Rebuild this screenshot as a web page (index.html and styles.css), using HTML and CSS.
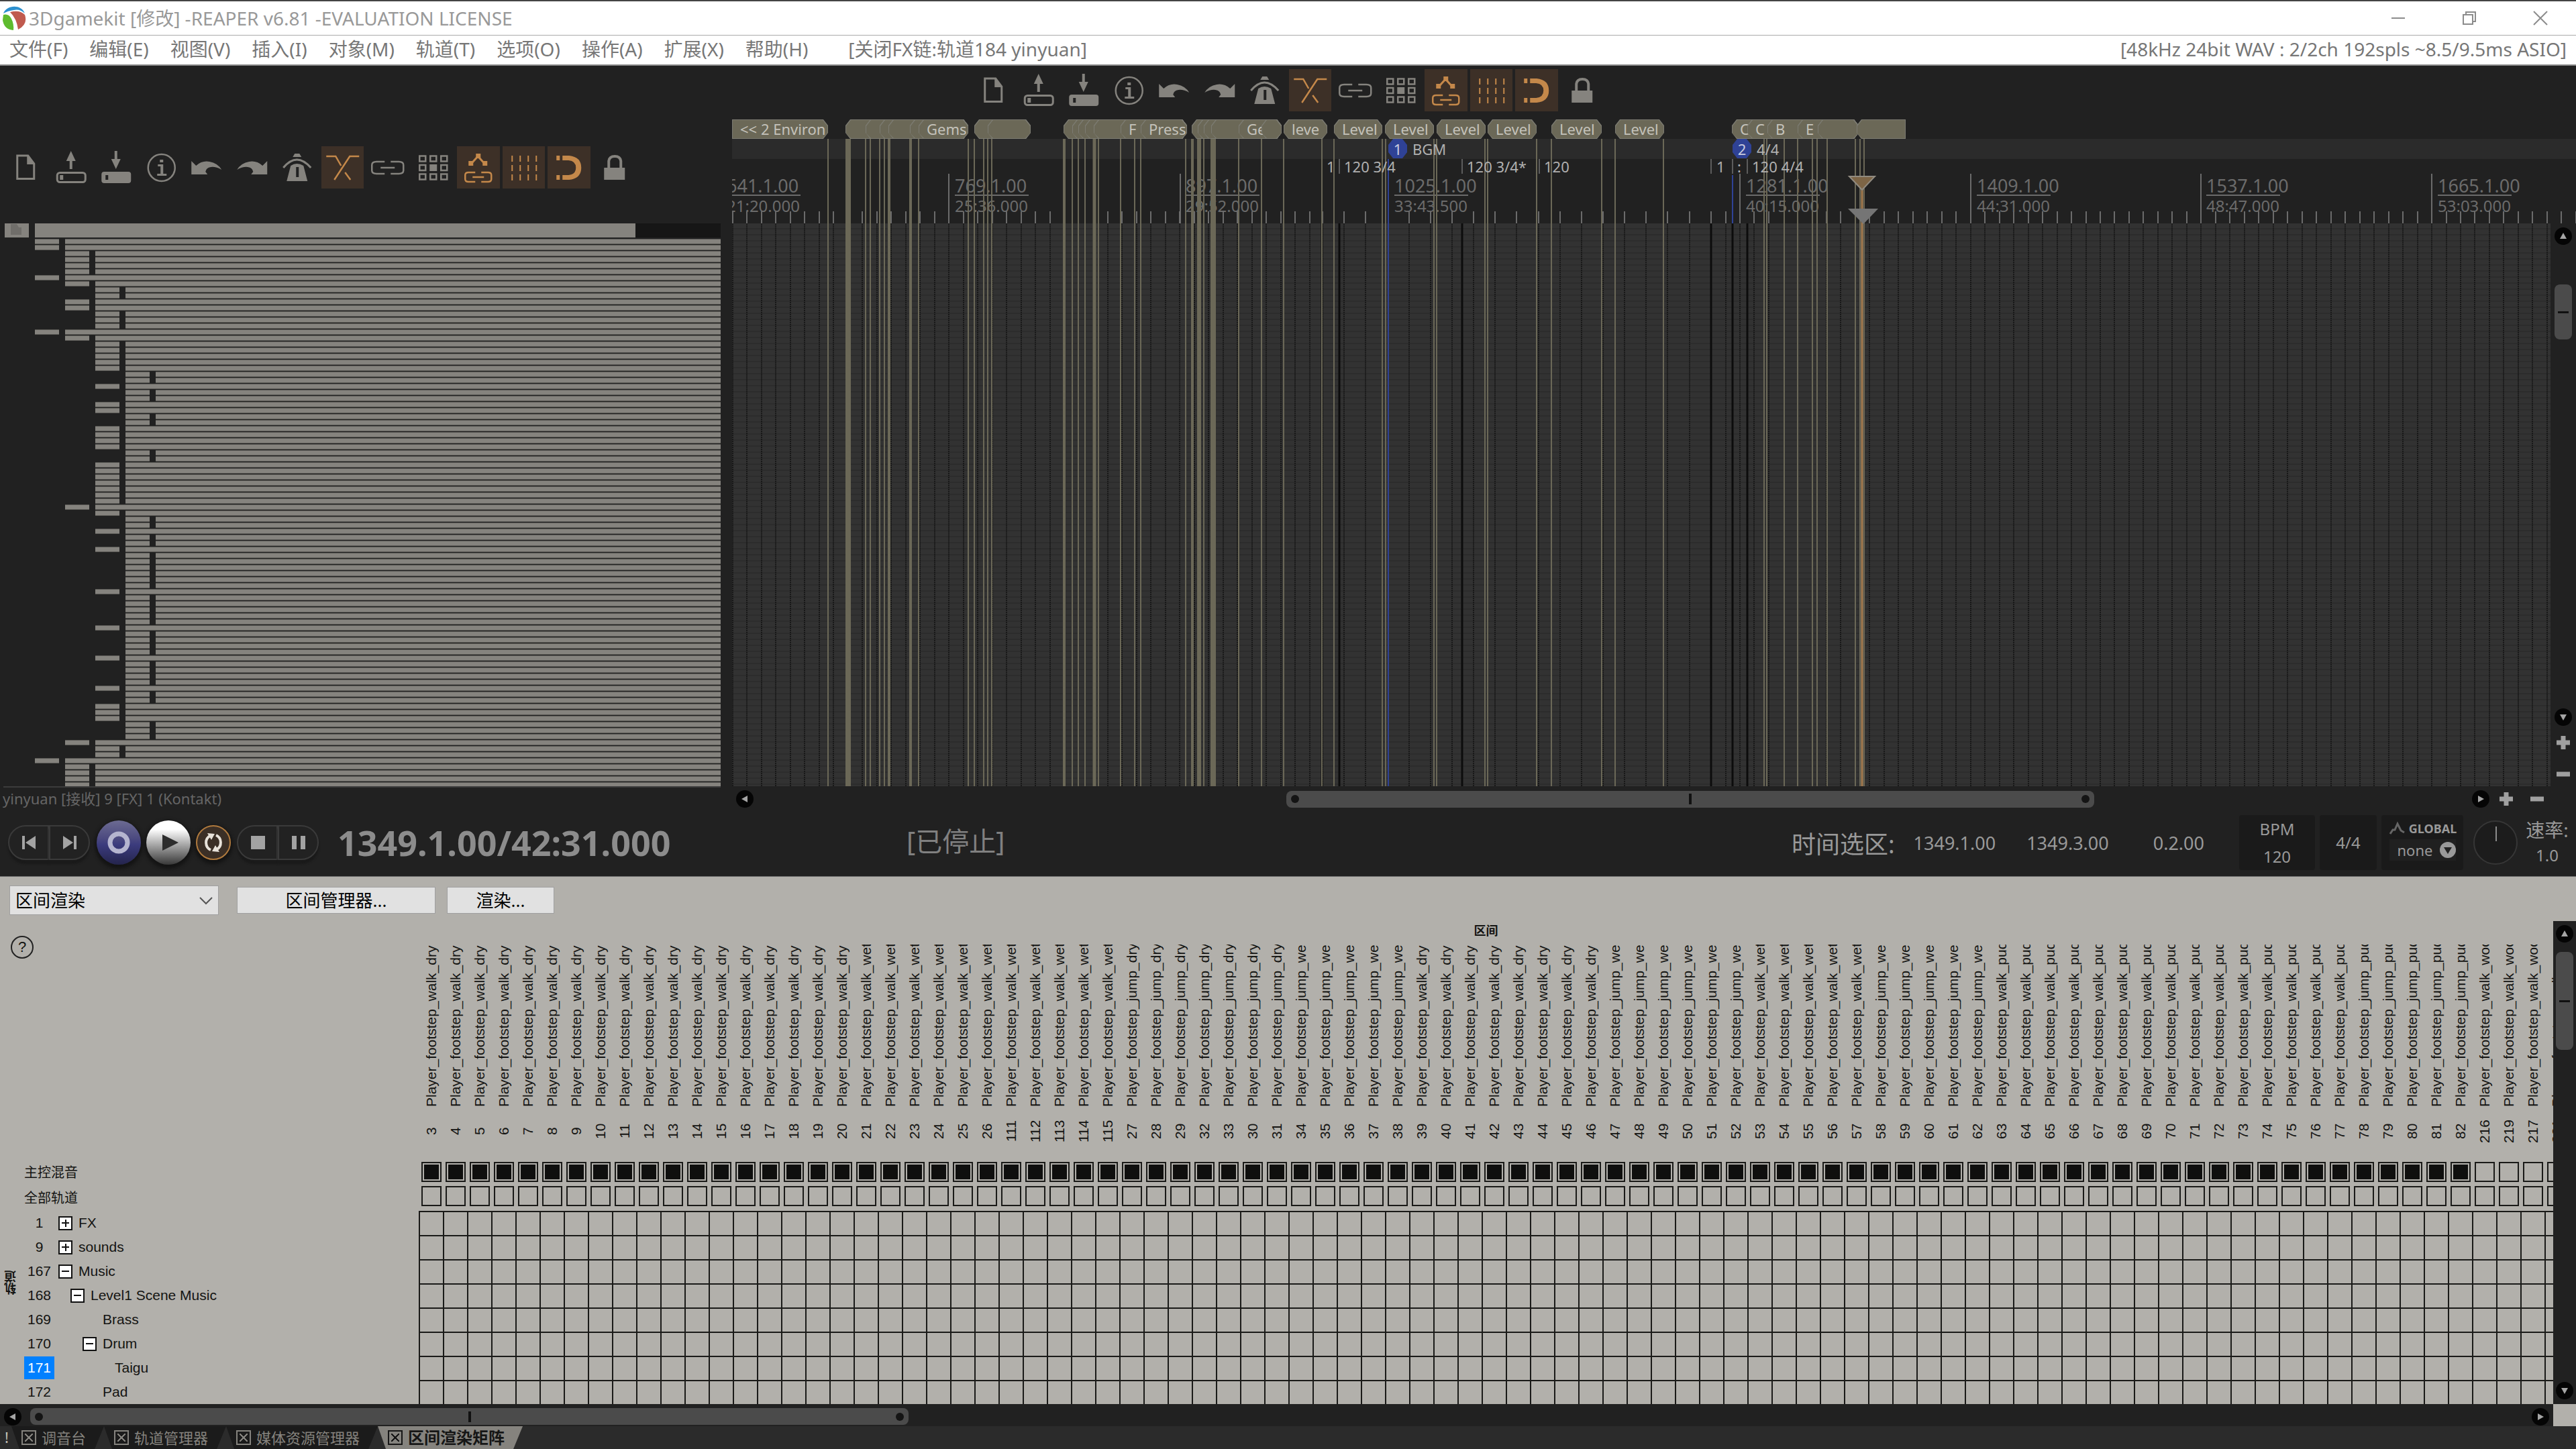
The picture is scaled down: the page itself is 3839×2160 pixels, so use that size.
FILE: index.html
```html
<!DOCTYPE html>
<html lang="zh-CN">
    <head>
        <meta charset="UTF-8">
        <meta name="viewport" content="width=device-width, initial-scale=1.0">
        <title>3Dgamekit - REAPER</title>
        <link rel="stylesheet" href="styles.css">
    </head>
    <body>
        <!-- icon set shared by the toolbars -->
        <svg class="symbols" aria-hidden="true">
            <symbol id="i-new" viewBox="0 0 63 63"><path d="M19.500 14h16l9 12v22.500h-25z" fill="none" stroke="currentColor" stroke-width="3"/><path d="M34 13l12 14H34z" fill="currentColor"/></symbol>
            <symbol id="i-open" viewBox="0 0 63 63"><path d="M31.500 7l7 15h-5v12h-4V22h-5z" fill="currentColor"/><rect x="11" y="39.500" width="42" height="14" rx="4" fill="none" stroke="currentColor" stroke-width="3"/><path d="M15 43h5v7h-5z" fill="currentColor"/></symbol>
            <symbol id="i-save" viewBox="0 0 63 63"><path d="M31.500 34l-7-15h5V7h4v12h5z" fill="currentColor"/><path d="M14 38h36q4 0 4 4v9q0 4-4 4H14q-4 0-4-4v-9q0-4 4-4zm2 5v7h4v-7z" fill="currentColor" fill-rule="evenodd"/></symbol>
            <symbol id="i-info" viewBox="0 0 63 63"><circle cx="31.500" cy="32" r="20" fill="none" stroke="currentColor" stroke-width="2.500"/><path d="M29 20h5v4h-5zM26 27h8v14h5v3H25v-3h5V30h-4z" fill="currentColor"/></symbol>
            <symbol id="i-undo" viewBox="0 0 63 63"><path d="M9 22l7 7q9-8 20-6 12 2 18 12-9-5-16-4-7 1-8 7l3 4H9z" fill="currentColor"/></symbol>
            <symbol id="i-redo" viewBox="0 0 63 63"><path d="M54 22l-7 7q-9-8-20-6-12 2-18 12 9-5 16-4 7 1 8 7l-3 4h24z" fill="currentColor"/></symbol>
            <symbol id="i-metro" viewBox="0 0 63 63"><path d="M28 11h7l3 5H25zM22 29q9-6 19 0l6 23H16zM30 31v15h4V31z" fill="currentColor" fill-rule="evenodd"/><path d="M11 32q20-24 41 0" fill="none" stroke="currentColor" stroke-width="3"/></symbol>
            <symbol id="i-xfade" viewBox="0 0 63 63"><path d="M7 15h14l8 14M56 15H42L19 50M35 39l8 11" fill="none" stroke="currentColor" stroke-width="2.500"/></symbol>
            <symbol id="i-link" viewBox="0 0 63 63"><path d="M27 23H15q-7 0-7 5v8q0 5 7 5h12M36 23h12q7 0 7 5v8q0 5-7 5H36M21 32h21" fill="none" stroke="currentColor" stroke-width="2.500"/></symbol>
            <symbol id="i-group" viewBox="0 0 63 63"><path d="M11 14.500h9v8h-9zM27 14.500h9v8h-9zM43 14.500h9v8h-9zM11 28h9v8h-9zM43 28h9v8h-9zM11 41.500h9v8h-9zM27 41.500h9v8h-9zM43 41.500h9v8h-9z" fill="none" stroke="currentColor" stroke-width="2.500"/><path d="M26 27h11v10H26z" fill="currentColor"/></symbol>
            <symbol id="i-env" viewBox="0 0 63 63"><path d="M21 26l10-11 10 11" fill="none" stroke="currentColor" stroke-width="3"/><path d="M28 11h7v7h-7zM17 22h7v7h-7zM38 22h7v7h-7z" fill="currentColor"/><path d="M27 39H17q-5 0-5 4v6q0 4 5 4h10M36 39h10q5 0 5 4v6q0 4-5 4H36M23 46h17" fill="none" stroke="currentColor" stroke-width="2.500"/></symbol>
            <symbol id="i-grid" viewBox="0 0 63 63"><path d="M14 14v9m0 5v9m0 5v9M26 14v9m0 5v9m0 5v9M38 14v9m0 5v9m0 5v9M50 14v9m0 5v9m0 5v9" fill="none" stroke="currentColor" stroke-width="2"/></symbol>
            <symbol id="i-snap" viewBox="0 0 63 63"><path d="M13 14h5v7h-5zM13 43h5v7h-5zM22 14h10q18 2 18 18T32 50H22v-7h9q11-1 11-11T31 21h-9z" fill="currentColor"/></symbol>
            <symbol id="i-lock" viewBox="0 0 63 63"><path d="M23 32V22q1-7 9-7t9 7v10" fill="none" stroke="currentColor" stroke-width="4"/><path d="M16 32h31v18H16z" fill="currentColor"/></symbol>
            <symbol id="i-tri" viewBox="0 0 26 26"><circle cx="13" cy="13" r="13" fill="#050505"/><path d="M13 8l5 9H8z" fill="#a5a5a5"/></symbol>
        </svg>

        <div class="edge"></div>
        <header class="titlebar">
            <svg class="logo" width="36" height="38" viewBox="0 0 36 38"><circle cx="18" cy="19" r="17" fill="#fff"/><path d="M2 12C6 0 28-3 34 12q-8-7-16-5-9 1-16 5z" fill="#2c90cf"/><path d="M2 14q8-2 12 6 4 8 3 17Q3 36 1 22z" fill="#5ebb2e"/><path d="M12 10q14-4 22 4 5 14-10 22-2-16-12-26z" fill="#c05a4e"/></svg>
            <h1>3Dgamekit [修改] -REAPER v6.81 -EVALUATION LICENSE</h1>
            <div class="window-buttons">
                <button aria-label="最小化"><svg width="26" height="40" viewBox="0 0 26 40"><path d="M3 20h20" stroke="#8c8c8c" stroke-width="2"/></svg></button>
                <button aria-label="还原"><svg width="26" height="40" viewBox="0 0 26 40"><path d="M4 15h14v14H4zM8 15v-4h14v14h-4" fill="none" stroke="#8c8c8c" stroke-width="2"/></svg></button>
                <button aria-label="关闭"><svg width="26" height="40" viewBox="0 0 26 40"><path d="M3 10l20 20M23 10L3 30" stroke="#8c8c8c" stroke-width="2"/></svg></button>
            </div>
        </header>
        <nav class="menubar">
            <button>文件(F)</button>
            <button>编辑(E)</button>
            <button>视图(V)</button>
            <button>插入(I)</button>
            <button>对象(M)</button>
            <button>轨道(T)</button>
            <button>选项(O)</button>
            <button>操作(A)</button>
            <button>扩展(X)</button>
            <button>帮助(H)</button>
            <span class="last-action">[关闭FX链:轨道184 yinyuan]</span>
            <span class="audio-status">[48kHz 24bit WAV : 2/2ch 192spls ~8.5/9.5ms ASIO]</span>
        </nav>

        <main class="workspace">
            <section class="tracks">
                <div class="toolbar"></div>
                <div class="track-list">
                    <div class="master-row">
                        <span class="master-icon"><svg width="36" height="20" viewBox="0 0 36 20"><path d="M9 1h9l3 5h4v11H9z" fill="#706e6a"/></svg></span>
                        <span class="master-bar"></span>
                    </div>
                    <div id="trackRows"></div>
                </div>
                <p class="track-info">yinyuan [接收] 9 [FX] 1 (Kontakt)</p>
            </section>

            <section class="arrange">
                <div class="toolbar"></div>
                <div class="timeline">
                    <div class="lane regions" id="regions"></div>
                    <div class="lane markers"></div>
                    <div class="ruler" id="ruler"></div>
                    <div class="canvas-row">
                        <div class="canvas"></div>
                        <div class="vscroll">
                            <button aria-label="上"><svg><use href="#i-tri"/></svg></button>
                            <div class="vtrack"><div class="vthumb arrange-vthumb"></div></div>
                            <button class="down" aria-label="下"><svg><use href="#i-tri"/></svg></button>
                            <button class="zoom" aria-label="放大"><svg viewBox="0 0 26 26"><path d="M13 3v20M3 13h20" stroke="#a0a0a0" stroke-width="7"/></svg></button>
                            <button class="zoom" aria-label="缩小"><svg viewBox="0 0 26 26"><path d="M3 13h20" stroke="#a0a0a0" stroke-width="7"/></svg></button>
                        </div>
                    </div>
                    <svg class="lines" id="lines"></svg>
                    <div class="flags" id="flags"></div>
                </div>
                <div class="hscroll arrange-hscroll">
                    <button class="left" aria-label="左"><svg><use href="#i-tri"/></svg></button>
                    <div class="htrack"><div class="hthumb arrange-hthumb"></div></div>
                    <button class="right" aria-label="右"><svg><use href="#i-tri"/></svg></button>
                    <button class="zoom" aria-label="水平放大"><svg viewBox="0 0 26 26"><path d="M13 3v20M3 13h20" stroke="#a0a0a0" stroke-width="7"/></svg></button>
                    <button class="zoom" aria-label="水平缩小"><svg viewBox="0 0 26 26"><path d="M3 13h20" stroke="#a0a0a0" stroke-width="7"/></svg></button>
                </div>
            </section>
        </main>

        <section class="transport">
            <div class="transport-buttons">
                <button class="pill first" aria-label="到开头"><svg width="36" height="26" viewBox="0 0 36 26"><path d="M8 3h4v20H8zM28 3v20L13 13z" fill="#a3a3a3"/></svg></button>
                <button class="pill last" aria-label="到结尾"><svg width="36" height="26" viewBox="0 0 36 26"><path d="M24 3h4v20h-4zM8 3v20l15-10z" fill="#a3a3a3"/></svg></button>
                <button class="round record" aria-label="录音"><svg width="40" height="40" viewBox="0 0 40 40"><circle cx="20" cy="20" r="13" fill="none" stroke="#b5b5cf" stroke-width="7"/></svg></button>
                <button class="round play" aria-label="播放"><svg width="40" height="40" viewBox="0 0 40 40"><path d="M11 8l24 12-24 12z" fill="#2c2c2c"/></svg></button>
                <button class="round loop" aria-label="循环"><svg width="34" height="34" viewBox="0 0 34 34"><path d="M13 28C4 24 4 11 12 7M21 6c9 4 9 17 1 21" fill="none" stroke="#e8e2da" stroke-width="4"/><path d="M8 3l11 1-5 9zM26 31l-11-1 5-9z" fill="#e8e2da"/></svg></button>
                <button class="pill first" aria-label="停止"><svg width="36" height="26" viewBox="0 0 36 26"><path d="M8 3h21v20H8z" fill="#a3a3a3"/></svg></button>
                <button class="pill last" aria-label="暂停"><svg width="36" height="26" viewBox="0 0 36 26"><path d="M8 3h7v20H8zM21 3h7v20h-7z" fill="#a3a3a3"/></svg></button>
            </div>
            <output class="position">1349.1.00/42:31.000</output>
            <output class="play-state">[已停止]</output>
            <div class="selection">
                <span class="selection-label">时间选区:</span>
                <span>1349.1.00</span>
                <span>1349.3.00</span>
                <span>0.2.00</span>
            </div>
            <div class="box bpm"><span>BPM</span><span>120</span></div>
            <div class="box signature">4/4</div>
            <div class="box global">
                <label for="automation"><svg width="28" height="22" viewBox="0 0 28 22"><path d="M3 19l4-6 3 0 4-9 5 10 5 3" fill="none" stroke="#666" stroke-width="3"/></svg>GLOBAL</label>
                <div class="automation">
                    <select id="automation"><option>none</option></select>
                    <svg width="24" height="24" viewBox="0 0 24 24"><circle cx="12" cy="12" r="12" fill="#999"/><path d="M6 8h12l-6 10z" fill="#222"/></svg>
                </div>
            </div>
            <svg class="knob" width="68" height="68" viewBox="0 0 68 68"><circle cx="34" cy="34" r="32" fill="#1c1c1c" stroke="#363636" stroke-width="2"/><path d="M35 10v22" stroke="#8c8c8c" stroke-width="2"/></svg>
            <div class="rate"><span>速率:</span><span class="rate-value">1.0</span></div>
        </section>

        <section class="panel">
            <div class="panel-bar">
                <div class="mode">
                    <select aria-label="模式"><option>区间渲染</option></select>
                    <svg width="20" height="14" viewBox="0 0 20 14"><path d="M1 2l9 9 9-9" fill="none" stroke="#555" stroke-width="2"/></svg>
                </div>
                <button class="manager">区间管理器...</button>
                <button class="render">渲染...</button>
            </div>
            <div class="matrix-row">
                <div class="matrix">
                    <div class="matrix-title">
                        <div class="help-cell"><button class="help" aria-label="帮助">?</button></div>
                        <h2>区间</h2>
                    </div>
                    <table id="matrix"></table>
                </div>
                <div class="vscroll">
                    <button aria-label="上"><svg><use href="#i-tri"/></svg></button>
                    <div class="vtrack"><div class="vthumb panel-vthumb"></div></div>
                    <button class="down" aria-label="下"><svg><use href="#i-tri"/></svg></button>
                </div>
            </div>
            <div class="panel-bottom">
                <div class="hscroll">
                    <button class="left" aria-label="左"><svg><use href="#i-tri"/></svg></button>
                    <div class="htrack"><div class="hthumb panel-hthumb"></div></div>
                    <button class="right" aria-label="右"><svg><use href="#i-tri"/></svg></button>
                </div>
                <div class="corner"></div>
            </div>
        </section>

        <footer class="tabs">
            <span class="bang">!</span>
            <button class="tab"><span class="tab-close"></span>调音台</button>
            <button class="tab"><span class="tab-close"></span>轨道管理器</button>
            <button class="tab"><span class="tab-close"></span>媒体资源管理器</button>
            <button class="tab active"><span class="tab-close"></span>区间渲染矩阵</button>
        </footer>

        <script src="script.js"></script>
    </body>
</html>
```

FILE: styles.css
```css
* {
    box-sizing: border-box;
}

body {
    margin: 0;
    height: 100vh;
    display: flex;
    flex-direction: column;
    overflow: hidden;
    background: #212121;
    color: #999;
    font-family: "Noto Sans", "Noto Sans CJK SC", sans-serif;
    font-size: 27px;
}

button, select {
    font: inherit;
    color: inherit;
    background: none;
    border: none;
    padding: 0;
    margin: 0;
    appearance: none;
}

.symbols {
    display: none;
}

/* window chrome */
.edge {
    height: 2px;
    background: #444;
}

.titlebar {
    height: 50px;
    display: flex;
    align-items: center;
    background: #fff;
    padding-left: 3px;
}

.titlebar h1 {
    flex: 1;
    margin: 0 0 3px 4px;
    font-size: 28px;
    font-weight: 400;
    color: #999;
}

.window-buttons {
    display: flex;
}

.window-buttons button {
    width: 106px;
    height: 48px;
    display: flex;
    align-items: center;
    justify-content: center;
}

.menubar {
    height: 46px;
    display: flex;
    align-items: center;
    gap: 32px;
    padding: 0 14px 4px;
    background: #fff;
    border-top: 1px solid #aaa;
    border-bottom: 2px solid #8c8c8c;
    color: #777;
    font-size: 28px;
    line-height: 38px;
    white-space: nowrap;
}

.last-action {
    flex: 1;
    margin-left: 28px;
}

/* workspace */
.workspace {
    flex: 1;
    display: flex;
    min-height: 0;
}

.tracks {
    width: 1091px;
    display: flex;
    flex-direction: column;
    padding-top: 120px;
}

.toolbar {
    flex: none;
    width: 945px;
    height: 63px;
    display: grid;
    grid-template-columns: repeat(14, 1fr);
    color: #85837e;
}

.toolbar button {
    margin: 0 2px;
    height: 63px;
}

.toolbar svg {
    display: block;
    width: 100%;
    height: 63px;
}

.toolbar .on {
    background: #3d3027;
    color: #c4884a;
}

.tracks .toolbar {
    margin: 0 0 52px 4px;
}

.track-list {
    flex: 1;
    min-height: 0;
    overflow: hidden;
    margin: 0 17px 0 5px;
    border-bottom: 2px solid #3c3c3c;
}

.master-row {
    display: flex;
    height: 23px;
    gap: 9px;
    padding-left: 2px;
}

.master-icon,
.master-bar {
    height: 21px;
    background: #85837e;
}

.master-icon {
    width: 36px;
}

.master-icon svg {
    display: block;
}

.master-bar {
    flex: 1;
    border-right: 127px solid #161616;
}

.track-row {
    display: flex;
    gap: 9px;
    height: 9px;
    padding-left: 47px;
}

.track-row i {
    height: 8px;
    background: #85837e;
    border-top: 1px solid #5c5b57;
    border-bottom: 1px solid #5c5b57;
}

.track-row .chip {
    width: 36px;
}

.track-row .strip {
    flex: 1;
}

.track-row.depth-1 {
    padding-left: 92px;
}

.track-row.depth-2 {
    padding-left: 137px;
}

.track-row.depth-3 {
    padding-left: 182px;
}

.track-info {
    margin: 0;
    padding-left: 4px;
    height: 32px;
    line-height: 32px;
    font-size: 22px;
    color: #666;
}

.arrange {
    flex: 1;
    min-width: 0;
    display: flex;
    flex-direction: column;
}

.arrange .toolbar {
    margin: 5px 0 12px 355px;
}

.timeline {
    position: relative;
    flex: 1;
    min-height: 0;
    display: flex;
    flex-direction: column;
    overflow: hidden;
}

.lane {
    height: 29px;
}

.regions {
    position: relative;
}

.markers {
    height: 30px;
    background: #2b2b2b;
}

.ruler {
    position: relative;
    height: 96px;
    color: #6b6b6b;
}

.canvas-row {
    flex: 1;
    display: flex;
    min-height: 0;
}

.canvas {
    flex: 1;
    background: repeating-linear-gradient(#323232 0 7px, #2c2c2c 7px 9px);
}

.lines {
    position: absolute;
    left: 0;
    top: 29px;
    width: 100%;
    height: calc(100% - 29px);
}

.flags {
    position: absolute;
    left: 0;
    top: 29px;
}

/* items placed by time along the ruler */
.region {
    position: absolute;
    top: 0;
    height: 29px;
    padding-left: 12px;
    overflow: hidden;
    background: #7c7b72;
    color: #c4c2ba;
    font-size: 22px;
    line-height: 29px;
    white-space: nowrap;
    clip-path: polygon(7px 0, calc(100% - 7px) 0, 100% 9px, 100% 20px, calc(100% - 7px) 100%, 7px 100%, 0 20px, 0 9px);
}

.region::before {
    content: "";
    position: absolute;
    inset: 1px;
    background: #6b6857;
    clip-path: inherit;
}

.region span {
    position: relative;
}

.region.open-left {
    clip-path: polygon(0 0, calc(100% - 7px) 0, 100% 9px, 100% 20px, calc(100% - 7px) 100%, 0 100%);
}

.region.open-right {
    clip-path: polygon(7px 0, 100% 0, 100% 100%, 7px 100%, 0 20px, 0 9px);
}

.ruler-label {
    position: absolute;
    top: 26px;
    line-height: 27px;
    white-space: nowrap;
}

.ruler-label small {
    display: block;
    width: 110px;
    border-top: 2px solid #6b6b6b;
    font-size: 24px;
    line-height: 30px;
}

.marker,
.tempo {
    position: absolute;
    display: flex;
    gap: 8px;
    height: 30px;
    line-height: 30px;
    font-size: 22px;
    color: #b0b0b0;
    white-space: nowrap;
}

.marker b {
    width: 28px;
    height: 29px;
    background: #2f4296;
    color: #c8cce0;
    font-weight: 400;
    text-align: center;
    clip-path: polygon(7px 0, 21px 0, 100% 9px, 100% 20px, 21px 100%, 7px 100%, 0 20px, 0 9px);
}

.tempo {
    top: 30px;
    height: 24px;
    line-height: 22px;
}

/* scrollbars */
.vscroll {
    width: 38px;
    display: flex;
    flex-direction: column;
    align-items: center;
    padding: 6px 0 5px;
    background: #212121;
}

.vscroll button,
.hscroll button {
    width: 26px;
    height: 26px;
}

.vscroll svg,
.hscroll svg {
    display: block;
    width: 26px;
    height: 26px;
}

.down svg {
    transform: rotate(180deg);
}

.left svg {
    transform: rotate(-90deg);
}

.right svg {
    transform: rotate(90deg);
}

.vscroll .zoom {
    margin-top: 12px;
}

.vscroll .zoom + .zoom {
    margin-top: 21px;
}

.vtrack {
    flex: 1;
    width: 26px;
}

.vthumb {
    display: flex;
    align-items: center;
    justify-content: center;
    border-radius: 8px;
    background: #4b4b4b;
}

.vthumb::before {
    content: "";
    width: 16px;
    height: 3px;
    background: #111;
}

.arrange-vthumb {
    height: 82px;
    margin-top: 59px;
}

.panel-vthumb {
    height: 146px;
    margin-top: 14px;
}

.hscroll {
    flex: 1;
    display: flex;
    align-items: center;
    background: #212121;
}

.arrange-hscroll {
    flex: none;
    height: 34px;
    padding: 4px 45px 0 6px;
}

.arrange-hscroll .right {
    margin-right: 12px;
}

.arrange-hscroll .zoom + .zoom {
    margin-left: 20px;
}

.htrack {
    flex: 1;
}

.hthumb {
    display: flex;
    align-items: center;
    justify-content: space-between;
    height: 25px;
    padding: 0 7px;
    border-radius: 8px;
    background: #4b4b4b;
}

.hthumb::before,
.hthumb::after {
    content: "";
    width: 12px;
    height: 12px;
    border-radius: 50%;
    background: #141414;
}

.arrange-hthumb,
.panel-hthumb {
    background: linear-gradient(#111, #111) center / 4px 16px no-repeat #4b4b4b;
}

.arrange-hthumb {
    width: 47%;
    margin-left: 31%;
}

.panel-hthumb {
    width: 35%;
    margin-left: 13px;
}

/* transport */
.transport {
    height: 100px;
    display: flex;
    align-items: center;
    padding: 0 10px 0 12px;
}

.transport-buttons {
    display: flex;
    align-items: center;
}

.pill {
    width: 61px;
    height: 52px;
    display: flex;
    align-items: center;
    justify-content: center;
    border: 2px solid #3a3a3a;
    background: #222;
    box-shadow: 0 6px 3px #1a1a1a;
}

.pill.first {
    border-radius: 26px 0 0 26px;
}

.pill.last {
    border-radius: 0 26px 26px 0;
}

.round {
    width: 66px;
    height: 66px;
    display: flex;
    align-items: center;
    justify-content: center;
    border-radius: 50%;
    box-shadow: 0 3px 5px 3px #141414;
}

.record {
    margin-left: 10px;
    background: linear-gradient(#6c6b92, #4c4a80 40%, #3b3b7d 55%, #24244c);
}

.play {
    margin-left: 8px;
    background: linear-gradient(#fff 20%, #9a9a9a 60%, #383838);
}

.loop {
    width: 52px;
    height: 52px;
    margin: 0 9px 0 8px;
    border: 2px solid #b07a3e;
    background: #3b2f26;
}

.position {
    width: 846px;
    padding-left: 28px;
    font-size: 52px;
    font-weight: 700;
    line-height: 64px;
    color: #8c8c8c;
    white-space: nowrap;
}

.play-state {
    flex: 1;
    margin-bottom: 4px;
    padding-left: 30px;
    font-size: 40px;
    line-height: 56px;
    color: #808080;
}

.selection {
    display: flex;
    align-items: center;
    gap: 46px;
    margin-right: 52px;
}

.selection-label {
    margin-right: -18px;
    font-size: 36px;
}

.selection span:last-child {
    margin-left: 20px;
}

.box {
    height: 82px;
    display: flex;
    flex-direction: column;
    align-items: center;
    justify-content: space-around;
    margin-right: 7px;
    background: #1a1a1a;
    font-size: 24px;
    line-height: 32px;
    border-radius: 4px;
}

.bpm {
    width: 113px;
}

.signature {
    width: 85px;
}

.global {
    width: 122px;
    justify-content: flex-start;
    padding-top: 4px;
}

.global label {
    display: flex;
    align-items: center;
    gap: 3px;
    font-size: 18px;
    font-weight: 700;
}

.automation {
    width: 99px;
    height: 32px;
    display: flex;
    align-items: center;
    justify-content: space-between;
    padding-left: 12px;
    background: #202020;
    font-size: 22px;
}

.automation select {
    height: 32px;
    line-height: 30px;
}

.knob {
    margin: 0 10px 0 7px;
}

.rate {
    display: flex;
    flex-direction: column;
    align-items: center;
    width: 66px;
    font-size: 28px;
    line-height: 38px;
}

.rate-value {
    font-size: 24px;
}

/* region render matrix */
.panel {
    background: #b2b0ab;
    color: #141412;
    border-top: 1px solid #666;
}

.panel-bar {
    display: flex;
    align-items: center;
    height: 66px;
    padding: 4px 14px 0;
}

.panel-bar select,
.panel-bar button {
    height: 40px;
    border: 1px solid #a0a0a0;
    background: #e1e1e1;
    color: #000;
    font-size: 26px;
    line-height: 36px;
}

.mode {
    position: relative;
    width: 312px;
    height: 44px;
}

.panel-bar .mode select {
    width: 100%;
    height: 44px;
    padding-left: 8px;
}

.mode svg {
    position: absolute;
    right: 9px;
    top: 16px;
}

.panel-bar .manager {
    width: 296px;
    margin-left: 27px;
}

.panel-bar .render {
    width: 160px;
    margin-left: 17px;
}

.matrix-row {
    display: flex;
    height: 720px;
}

.matrix {
    flex: 1;
    min-width: 0;
    overflow: hidden;
    font-family: "Liberation Sans", "Noto Sans CJK SC", sans-serif;
    font-size: 21px;
}

.matrix-row .vscroll,
.corner {
    width: 34px;
}

.matrix-row .vscroll {
    padding-bottom: 7px;
}

.matrix-title {
    display: flex;
    height: 35px;
}

.help-cell {
    width: 624px;
    padding: 22px 0 0 16px;
}

.help {
    width: 34px;
    height: 34px;
    border: 2px solid #222;
    border-radius: 50%;
    font-size: 22px;
    line-height: 30px;
}

.matrix-title h2 {
    flex: 1;
    margin: 0;
    font-size: 18px;
    line-height: 30px;
    text-align: center;
}

table {
    width: 3828px;
    table-layout: fixed;
    border-spacing: 0;
}

th, td {
    height: 36px;
    padding: 0;
    font-weight: 400;
    text-align: left;
}

.axis-col {
    width: 36px;
}

.name-col {
    width: 588px;
}

.axis {
    padding-left: 4px;
    font-size: 18px;
    font-weight: 700;
    vertical-align: middle;
}

.axis span,
.region-name span,
.region-number span {
    display: block;
    writing-mode: vertical-rl;
    transform: rotate(180deg);
    white-space: nowrap;
}

.axis span {
    width: 24px;
}

.region-name {
    height: 248px;
    padding-left: 2px;
    vertical-align: top;
}

.region-name span {
    width: 34px;
    height: 242px;
    line-height: 34px;
    overflow: hidden;
}

.region-number {
    height: 74px;
    padding: 0 0 14px 2px;
    vertical-align: middle;
}

.region-number span {
    width: 34px;
    height: 60px;
    line-height: 34px;
    text-align: center;
}

.check {
    padding: 2px 0 0 4px;
    vertical-align: top;
}

.check-last {
    height: 39px;
}

.check input {
    display: block;
    appearance: none;
    width: 30px;
    height: 30px;
    margin: 0;
    border: 2px solid #1a1a18;
}

.check input:checked {
    background: #0f0f0e;
    outline: 2px solid #b2b0ab;
    outline-offset: -4px;
}

.group-name {
    font-size: 20px;
    line-height: 34px;
    white-space: nowrap;
}

.cell {
    border-left: 2px solid #1a1a18;
    border-top: 2px solid #1a1a18;
}

.track {
    display: flex;
    align-items: center;
    height: 36px;
}

.track .number {
    width: 45px;
    height: 34px;
    line-height: 34px;
    text-align: center;
}

.track.selected .number {
    background: #0080ff;
    color: #fff;
}

.track .toggle {
    width: 21px;
    height: 21px;
    margin: 0 9px 0 6px;
    border: 2px solid #111;
    background:
        linear-gradient(#111, #111) center / 11px 2px no-repeat,
        #fff;
}

.track .toggle.plus {
    background:
        linear-gradient(#111, #111) center / 11px 2px no-repeat,
        linear-gradient(#111, #111) center / 2px 11px no-repeat,
        #fff;
}

.track .leaf {
    width: 54px;
}

.track .indent {
    width: 18px;
}

.panel-bottom {
    display: flex;
    height: 33px;
}

.panel-bottom .hscroll {
    padding: 4px 6px 0;
}

/* docker tabs */
.tabs {
    display: flex;
    height: 34px;
    background: #2b2b2b;
    font-size: 22px;
    line-height: 32px;
    color: #85837e;
}

.bang {
    width: 17px;
    padding-left: 7px;
    color: #c4c2ba;
}

.tab {
    display: flex;
    align-items: center;
    gap: 8px;
    height: 34px;
    padding: 0 27px 0 15px;
    background: #1b1b1b;
    clip-path: polygon(0 0, 100% 0, calc(100% - 14px) 100%, 12px 100%);
}

.tab.active {
    background: #85837e;
    color: #161616;
    font-size: 24px;
    font-weight: 700;
}

.tab-close {
    width: 22px;
    height: 22px;
    border: 2px solid currentColor;
    background:
        linear-gradient(45deg, transparent 45%, currentColor 45% 55%, transparent 55%) center / 12px 12px no-repeat,
        linear-gradient(-45deg, transparent 45%, currentColor 45% 55%, transparent 55%) center / 12px 12px no-repeat;
}
```

FILE: script.js
```js
const tools = [
    ['new', '新建工程'], ['open', '打开工程'], ['save', '保存工程'], ['info', '工程设置'],
    ['undo', '撤销'], ['redo', '重做'], ['metro', '节拍器'], ['xfade', '自动交叉淡化', true],
    ['link', '对象编组'], ['group', '波纹编辑'], ['env', '移动包络', true], ['grid', '网格线', true],
    ['snap', '吸附', true], ['lock', '锁定']
];

document.querySelectorAll('.toolbar').forEach(bar => {
    bar.innerHTML = tools.map(([icon, label, on]) =>
        `<button class="${on ? 'on' : ''}" aria-label="${label}"><svg><use href="#i-${icon}"/></svg></button>`
    ).join('');
});

// folder depth of every track in the list
const depths = '00' + '1111' + '01' + '22' + '11' + '222' + '01' + '22222' + '33' + '2' + '33' + '22' + '33' +
    '2222' + '33' + '2222222' + '12' + '33' + '2' + '33' + '2' + '333333' + '2' + '33333' + '2' + '3333' +
    '2' + '3333' + '2' + '33' + '222' + '333' + '1' + '22' + '0' + '1111';

document.getElementById('trackRows').innerHTML = [...depths].map(d =>
    `<div class="track-row depth-${d}"><i class="chip"></i><i class="strip"></i></div>`
).join('');

// x, width, name
const regions = [
    [0, 143, '&lt;&lt; 2 Environ', 'open-left'],
    [169, 183], [199, 153], [220, 132], [233, 119], [265, 87], [278, 74, 'Gems'],
    [361, 84], [381, 64],
    [494, 184], [507, 171], [516, 162], [526, 152], [539, 139], [579, 99, 'F'], [609, 69, 'Press'],
    [685, 134], [694, 125], [703, 116], [714, 105], [755, 64, 'Ge'], [789, 30],
    [822, 65, 'leve'], [897, 72, 'Level'], [973, 73, 'Level'], [1050, 73, 'Level'],
    [1126, 73, 'Level'], [1221, 75, 'Level'], [1316, 73, 'Level'],
    [1490, 189, 'C'], [1513, 166, 'C'], [1543, 136, 'B'], [1588, 91, 'E'], [1618, 61],
    [1676, 73, '', 'open-right']
];

document.getElementById('regions').innerHTML = regions.map(([x, w, name = '', cls = '']) =>
    `<div class="region ${cls}" style="left:${x}px;width:${w}px"><span>${name}</span></div>`
).join('');

const labels = [
    [-8, '641.1.00', '21:20.000'], [332, '769.1.00', '25:36.000'], [676, '897.1.00', '29:52.000'],
    [987, '1025.1.00', '33:43.500'], [1511, '1281.1.00', '40:15.000'], [1855, '1409.1.00', '44:31.000'],
    [2197, '1537.1.00', '48:47.000'], [2542, '1665.1.00', '53:03.000']
];

document.getElementById('ruler').innerHTML = labels.map(([x, bar, time]) =>
    `<div class="ruler-label" style="left:${x}px">${bar}<small>${time}</small></div>`
).join('');

const markers = [[978, 1, 'BGM'], [1491, 2, '4/4']];
const tempos = [[886, '1'], [912, '120 3/4'], [1095, '120 3/4*'], [1210, '120'], [1467, '1'], [1498, ':'], [1520, '120 4/4']];

document.getElementById('flags').innerHTML =
    markers.map(([x, n, name]) => `<div class="marker" style="left:${x}px"><b>${n}</b>${name}</div>`).join('') +
    tempos.map(([x, text]) => `<div class="tempo" style="left:${x}px">${text}</div>`).join('');

// grid: 8 bars per line, wider through the 3/4 part
const grid = [];
for (let i = -15; i <= 25; i++) grid.push(323 + i * 21.5);
for (let i = 0; i <= 18; i++) grid.push(880 + i * 32.15);
for (let i = -1; i <= 58; i++) grid.push(1502 + i * 21.48);
const hidden = x => (x > 165 && x < 180) || (x > 478 && x < 555) || (x > 960 && x < 1000) || (x > 1550 && x < 1625);

let svg = '';
const line = (x, y1, y2, color, w = 2, extra = '') => {
    svg += `<line x1="${Math.round(x)}" x2="${Math.round(x)}" y1="${y1}" y2="${y2}" stroke="${color}" stroke-width="${w}" ${extra}/>`;
};

grid.filter(x => !hidden(x)).forEach(x => {
    line(x, 108, 126, '#6b6b6b');
    if (x < 2710) line(x, 126, '100%', '#181818', 2, 'stroke-dasharray="2 1"');
});
[323, 668, 1502, 1846, 2189, 2533].forEach(x => line(x, 52, 126, '#6b6b6b'));
[879, 905, 1088, 1203, 1459, 1491, 1513].forEach(x => line(x, 30, 52, '#5c5c5c'));
[879, 905, 1088, 1459, 1491, 1513].forEach(x => line(x, 126, '100%', '#0c0c0c', 3));

// region edges: x or [x, width]
const edges = [
    143, [173, 8], 199, 206, 220, 227, [234, 4], [266, 4], 278, 352, 361, 375, 381, 387,
    [495, 4], 507, 516, 526, [540, 5], 546, 579, 600, 609, 676, [686, 4], [696, 6], 703, [717, 8],
    755, 789, 822, 879, 897, 969, 974, 1046, 1050, 1122, 1126, 1199, 1221, 1296, 1316, 1388,
    1538, 1542, 1568, 1588, 1610, 1617, 1632, 1674, 1681, 1687
];
edges.forEach(e => Array.isArray(e) ? line(e[0], 0, '100%', '#6b6857', e[1]) : line(e, 0, '100%', '#6b6857'));

line(978, 30, '100%', '#2f4296');
line(1491, 54, 126, '#2f4296');
line(1684, 60, '100%', '#a87f52', 3);
svg += '<path d="M1665 56h38l-19 20z" fill="#7d6546" stroke="#918b80" stroke-width="2"/>';
svg += '<path d="M1663 104h45l-22 23z" fill="#757575"/>';
document.getElementById('lines').innerHTML = svg;

// region render matrix
const range = (a, b) => Array.from({ length: b - a + 1 }, (_, i) => a + i);
const groups = [
    ['walk_dry', range(3, 20)],
    ['walk_wet', [...range(21, 26), ...range(111, 115)]],
    ['jump_dry', [27, 28, 29, 32, 33, 30, 31]],
    ['jump_wet', range(34, 38)],
    ['walk_dry', range(39, 46)],
    ['jump_wet', range(47, 52)],
    ['walk_wet', range(53, 57)],
    ['jump_wet', range(58, 62)],
    ['walk_puddle', range(63, 77)],
    ['jump_puddle', range(78, 82)],
    ['walk_wood', [216, 219, 217, 221]]
];
const columns = groups.flatMap(([name, ids]) => ids.map(id => ({ id, name: 'Player_footstep_' + name })));

const tracks = [
    [1, 'FX', 0, 'plus'], [9, 'sounds', 0, 'plus'], [167, 'Music', 0, 'minus'],
    [168, 'Level1 Scene Music', 1, 'minus'], [169, 'Brass', 1], [170, 'Drum', 2, 'minus'],
    [171, 'Taigu', 2], [172, 'Pad', 1]
];
const trackCell = ([id, name, depth, state]) => {
    const indent = '<span class="indent"></span>'.repeat(depth);
    const toggle = state
        ? `<button class="toggle ${state}" aria-label="${name}"></button>`
        : '<span class="leaf"></span>';
    return `<th><div class="track ${id === 171 ? 'selected' : ''}"><span class="number">${id}</span>${indent}${toggle}${name}</div></th>`;
};
const checks = (row, last) => columns.map(c =>
    `<td class="check ${last}"><input type="checkbox" aria-label="${row} ${c.id}" ${row === '主控混音' && c.id <= 115 ? 'checked' : ''}></td>`
).join('');

document.getElementById('matrix').innerHTML =
    '<colgroup><col class="axis-col"><col class="name-col"></colgroup>' +
    '<tr><td colspan="2"></td>' + columns.map(c => `<th class="region-name"><span>${c.name}</span></th>`).join('') + '</tr>' +
    '<tr><td colspan="2"></td>' + columns.map(c => `<th class="region-number"><span>${c.id}</span></th>`).join('') + '</tr>' +
    `<tr><th class="axis" rowspan="10"><span>轨道</span></th><th class="group-name">主控混音</th>${checks('主控混音', '')}</tr>` +
    `<tr><th class="group-name">全部轨道</th>${checks('全部轨道', 'check-last')}</tr>` +
    tracks.map(t => `<tr>${trackCell(t)}${'<td class="cell"></td>'.repeat(columns.length)}</tr>`).join('');
```
